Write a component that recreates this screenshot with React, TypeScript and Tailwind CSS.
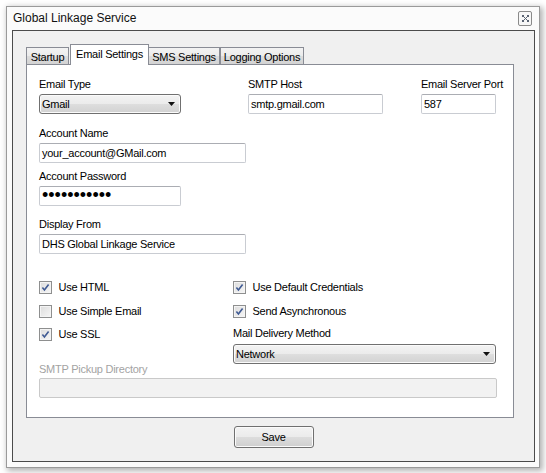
import React from "react";

const FONT = "font-['Liberation_Sans',Arial,sans-serif]";

function Label({ children, disabled }: { children: React.ReactNode; disabled?: boolean }) {
  return (
    <div
      className={`h-[13px] leading-[13px] text-[11px] tracking-[-0.25px] whitespace-nowrap ${
        disabled ? "text-[#a3a3a3]" : "text-black"
      }`}
    >
      {children}
    </div>
  );
}

function TextBox({ value, width, className = "" }: { value: string; width: string; className?: string }) {
  return (
    <div
      className={`${width} h-[20px] mt-[3px] border border-[#c9ccd2] border-t-[#abadb3] rounded-[2px] bg-white pl-[2px] leading-[18px] text-[11px] tracking-[-0.25px] text-black whitespace-nowrap overflow-hidden ${className}`}
    >
      {value}
    </div>
  );
}

function Combo({ value, width, className = "" }: { value: string; width: string; className?: string }) {
  return (
    <div
      className={`${width} h-[20px] border border-[#707070] rounded-[3px] bg-[linear-gradient(#f3f3f3_0%,#ebebeb_50%,#dedede_50%,#d2d2d2_100%)] shadow-[inset_0_0_0_1px_#fbfbfb] flex items-center justify-between pl-[2px] pr-[5px] ${className}`}
    >
      <span className="text-[11px] tracking-[-0.25px] leading-[18px] text-black">{value}</span>
      <svg width="7" height="4" viewBox="0 0 7 4">
        <path d="M0 0 H7 L3.5 4 Z" fill="#111" />
      </svg>
    </div>
  );
}

function Check({ label, checked }: { label: string; checked?: boolean }) {
  return (
    <div className="flex items-center gap-[6.5px] h-[13px]">
      <div className="w-[13px] h-[13px] border border-[#8e8f8f] bg-[linear-gradient(135deg,#dcdcdc,#f6f6f6)] shadow-[inset_0_0_0_1px_#f4f4f4] flex items-center justify-center">
        {checked && (
          <svg width="9" height="9" viewBox="0 0 9 9">
            <path d="M1.4 4.6 L3.4 6.9 L7.6 1.4" fill="none" stroke="#3f5a93" strokeWidth="1.6" />
          </svg>
        )}
      </div>
      <span className="text-[11px] tracking-[-0.25px] leading-[13px] text-black whitespace-nowrap">{label}</span>
    </div>
  );
}

const tabBase =
  "border-t border-x border-[#898c95] text-[11px] tracking-[-0.25px] text-black flex justify-center whitespace-nowrap";
const tabIdle = `${tabBase} h-[17px] mb-[1px] leading-[17px] pt-[1px] bg-[linear-gradient(#f3f3f3_0%,#ebebeb_50%,#dddddd_50%,#d3d3d3_100%)]`;

export default function App() {
  return (
    <div className={`${FONT} bg-white w-[546px] h-[473px] pl-[6px] pt-[6px]`}>
      <div className="w-[534px] h-[462px] border border-[#9a9a9a] bg-[#fbfbfb] flex flex-col shadow-[2px_2px_6px_1px_rgba(0,0,0,0.3)]">
        {/* title bar */}
        <div className="h-[23px] flex items-start justify-between pl-[6px] pr-[7px]">
          <span className="text-[12px] leading-[22px] text-[#111]">Global Linkage Service</span>
          <div className="mt-[4px] w-[14px] h-[15px] border border-[#8a8a8a] rounded-[2px] bg-[#f7f7f7] flex items-center justify-center">
            <svg width="7" height="7" viewBox="0 0 7 7">
              <path d="M1.5 1.5 L5.5 5.5 M5.5 1.5 L1.5 5.5" stroke="#5a6372" strokeWidth="1" />
              <rect x="0" y="0" width="2" height="2" fill="#5a6372" />
              <rect x="5" y="0" width="2" height="2" fill="#5a6372" />
              <rect x="0" y="5" width="2" height="2" fill="#5a6372" />
              <rect x="5" y="5" width="2" height="2" fill="#5a6372" />
            </svg>
          </div>
        </div>

        {/* client area */}
        <div className="ml-[5px] mr-[4px] h-[432px] border border-[#4b4b4b] bg-[#f0f0f0] pt-[13px]">
          <div className="pl-[13px]">
            {/* tabs */}
            <div className="relative z-10 flex items-end h-[21px] -mb-px">
              <div className={`${tabIdle} w-[43px]`}>Startup</div>
              <div className={`${tabBase} w-[79px] h-[21px] bg-white leading-[17px] pt-[1px] ml-px`}>Email Settings</div>
              <div className={`${tabIdle} w-[71px] border-l-0`}>SMS Settings</div>
              <div className={`${tabIdle} w-[84px]`}>Logging Options</div>
            </div>

            {/* panel */}
            <div className="w-[488px] h-[354px] border border-[#898c95] bg-white pl-[12px] pt-[13px]">
              <div className="flex">
                <div className="w-[142px]">
                  <Label>Email Type</Label>
                  <Combo value="Gmail" width="w-[142px]" className="mt-[3px]" />
                </div>
                <div className="ml-[67px] w-[135px]">
                  <Label>SMTP Host</Label>
                  <TextBox value="smtp.gmail.com" width="w-[135px]" />
                </div>
                <div className="ml-[38px] w-[75px]">
                  <Label>Email Server Port</Label>
                  <TextBox value="587" width="w-[75px]" />
                </div>
              </div>

              <div className="mt-[13px]">
                <Label>Account Name</Label>
                <TextBox value="your_account@GMail.com" width="w-[207px]" />
              </div>

              <div className="mt-[7px]">
                <Label>Account Password</Label>
                <TextBox
                  value="•••••••••••"
                  width="w-[142px]"
                  className="!text-[18px] !tracking-[0px] !leading-[17px]"
                />
              </div>

              <div className="mt-[12px]">
                <Label>Display From</Label>
                <TextBox value="DHS Global Linkage Service" width="w-[207px]" />
              </div>

              <div className="mt-[27px] grid grid-cols-[194px_263px]">
                <div className="flex flex-col">
                  <Check label="Use HTML" checked />
                  <div className="mt-[11px]">
                    <Check label="Use Simple Email" />
                  </div>
                  <div className="mt-[10px]">
                    <Check label="Use SSL" checked />
                  </div>
                  <div className="mt-[22px]">
                    <Label disabled>SMTP Pickup Directory</Label>
                  </div>
                </div>
                <div className="flex flex-col">
                  <Check label="Use Default Credentials" checked />
                  <div className="mt-[11px]">
                    <Check label="Send Asynchronous" checked />
                  </div>
                  <div className="mt-[9px]">
                    <Label>Mail Delivery Method</Label>
                  </div>
                  <Combo value="Network" width="w-[263px]" className="mt-[4px]" />
                </div>
              </div>

              <div className="mt-[2px] w-[458px] h-[20px] border border-[#c9c9c9] rounded-[2px] bg-[#f2f2f2]" />
            </div>
          </div>

          {/* button */}
          <div className="flex justify-center mt-[8px]">
            <div className="w-[80px] h-[22px] border border-[#707070] rounded-[3px] bg-[linear-gradient(#f3f3f3_0%,#ebebeb_50%,#dddddd_50%,#cfcfcf_100%)] shadow-[inset_0_0_0_1px_#fbfbfb] flex items-center justify-center text-[11px] tracking-[-0.25px] text-black">
              Save
            </div>
          </div>
        </div>
      </div>
    </div>
  );
}
